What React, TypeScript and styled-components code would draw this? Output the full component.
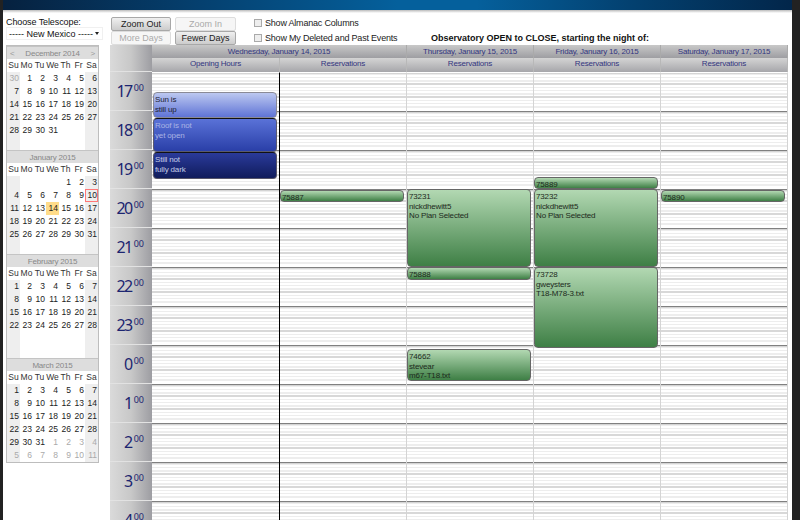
import React from "react";
import styled, { createGlobalStyle } from "styled-components";

const Global = createGlobalStyle`
    html, body {
        margin: 0;
        padding: 0;
        background: #222;
    }
    * {
        box-sizing: border-box;
    }
`;

const FONT = `"Liberation Sans", Arial, sans-serif`;
const TRACKS = "128px repeat(4, 127px)";

// one hour is 39px: dark line, then thin stripes every 3.25px
const stripes = () => {
    const stops: string[] = ["#808080 0px", "#808080 1px"];
    for (let i = 1; i < 12; i++) {
        const y = i * 3.25;
        const color = i % 4 === 0 ? "#d8d8d8" : "#ededed";
        stops.push(`#fff ${y - 1.5}px`, `${color} ${y - 1.5}px`, `${color} ${y}px`, `#fff ${y}px`);
    }
    stops.push("#fff 39px");
    return `linear-gradient(180deg, ${stops.join(", ")})`;
};

type Month = {
    title: string;
    lead: number[];
    days: number;
    trail: number[];
    prev?: boolean;
    today?: number;
    selected?: number;
};

const MONTHS: Month[] = [
    { title: "December 2014", lead: [30], days: 31, trail: [], prev: true },
    { title: "January 2015", lead: [], days: 31, trail: [], today: 14, selected: 10 },
    { title: "February 2015", lead: [], days: 28, trail: [] },
    { title: "March 2015", lead: [], days: 31, trail: [1, 2, 3, 4, 5, 6, 7, 8, 9, 10, 11] },
];

const LEAD_BLANKS: Record<string, number> = { "January 2015": 4 };
const WEEK = ["Su", "Mo", "Tu", "We", "Th", "Fr", "Sa"];
const HOURS = [17, 18, 19, 20, 21, 22, 23, 0, 1, 2, 3, 4];

type Ev = { top: number; height: number; kind: string; lines: string[] };

const COLUMNS: { title: string; events: Ev[] }[] = [
    {
        title: "Opening Hours",
        events: [
            { top: 20, height: 26, kind: "sun", lines: ["Sun is", "still up"] },
            { top: 46, height: 34, kind: "roof", lines: ["Roof is not", "yet open"] },
            { top: 80, height: 27, kind: "dark", lines: ["Still not", "fully dark"] },
        ],
    },
    { title: "Reservations", events: [{ top: 118, height: 12, kind: "green", lines: ["75887"] }] },
    {
        title: "Reservations",
        events: [
            { top: 117, height: 78, kind: "green", lines: ["73231", "nickdhewitt5", "No Plan Selected"] },
            { top: 195, height: 13, kind: "green", lines: ["75888"] },
            { top: 277, height: 32, kind: "green", lines: ["74662", "stevear", "m67-T18.txt"] },
        ],
    },
    {
        title: "Reservations",
        events: [
            { top: 105, height: 12, kind: "green", lines: ["75889"] },
            { top: 117, height: 78, kind: "green", lines: ["73232", "nickdhewitt5", "No Plan Selected"] },
            { top: 195, height: 81, kind: "green", lines: ["73728", "gweysters", "T18-M78-3.txt"] },
        ],
    },
    { title: "Reservations", events: [{ top: 118, height: 12, kind: "green", lines: ["75890"] }] },
];

const App = () => {
    return (
        <Frame>
            <Global />
            <TopBar />
            <Content>
                <Sidebar>
                    <TelescopeLabel>Choose Telescope:</TelescopeLabel>
                    <TelescopeSelect>
                        ----- New Mexico -----
                        <SelectArrow />
                    </TelescopeSelect>
                    <Calendars>
                        {MONTHS.map((m) => {
                            const blanks = LEAD_BLANKS[m.title] || 0;
                            const daysList = Array.from({ length: m.days }, (_, i) => i + 1);
                            const shown = blanks + m.lead.length + m.days + m.trail.length;
                            const filler = 42 - shown;
                            return (
                                <MonthBox key={m.title}>
                                    <MonthTitle>
                                        {m.prev && <Nav>&lt;</Nav>}
                                        <MonthName>{m.title}</MonthName>
                                        {m.prev && <Nav>&gt;</Nav>}
                                    </MonthTitle>
                                    <WeekRow>
                                        {WEEK.map((d) => (
                                            <WeekDay key={d}>{d}</WeekDay>
                                        ))}
                                    </WeekRow>
                                    <DayGrid>
                                        {Array.from({ length: blanks }, (_, i) => (
                                            <Day key={`b${i}`} $weekend={i % 7 === 0} />
                                        ))}
                                        {m.lead.map((d) => (
                                            <Day key={`l${d}`} $weekend $other>
                                                {d}
                                            </Day>
                                        ))}
                                        {daysList.map((d) => {
                                            const idx = (blanks + m.lead.length + d - 1) % 7;
                                            return (
                                                <Day
                                                    key={d}
                                                    $weekend={idx === 0 || idx === 6}
                                                    $today={m.today === d}
                                                    $selected={m.selected === d}
                                                >
                                                    {d}
                                                </Day>
                                            );
                                        })}
                                        {m.trail.map((d, i) => {
                                            const idx = (blanks + m.lead.length + m.days + i) % 7;
                                            return (
                                                <Day key={`t${d}`} $other $weekend={idx === 0 || idx === 6}>
                                                    {d}
                                                </Day>
                                            );
                                        })}
                                        {Array.from({ length: filler }, (_, i) => {
                                            const idx = (shown + i) % 7;
                                            return <Day key={`f${i}`} $weekend={idx === 0 || idx === 6} />;
                                        })}
                                    </DayGrid>
                                </MonthBox>
                            );
                        })}
                    </Calendars>
                </Sidebar>
                <Main>
                    <Toolbar>
                        <ButtonGrid>
                            <Button>Zoom Out</Button>
                            <Button $disabled>Zoom In</Button>
                            <Button $disabled>More Days</Button>
                            <Button>Fewer Days</Button>
                        </ButtonGrid>
                        <Checks>
                            <CheckRow>
                                <Check />
                                Show Almanac Columns
                            </CheckRow>
                            <CheckRow>
                                <Check />
                                Show My Deleted and Past Events
                            </CheckRow>
                        </Checks>
                        <Heading>Observatory OPEN to CLOSE, starting the night of:</Heading>
                    </Toolbar>
                    <Scheduler>
                        <TimeColumn>
                            <TimeHead />
                            {HOURS.map((h) => (
                                <HourCell key={h}>
                                    {h}
                                    <Minutes>00</Minutes>
                                </HourCell>
                            ))}
                        </TimeColumn>
                        <Board>
                            <DayRow>
                                <DayHead $span={2}>Wednesday, January 14, 2015</DayHead>
                                <DayHead>Thursday, January 15, 2015</DayHead>
                                <DayHead>Friday, January 16, 2015</DayHead>
                                <DayHead>Saturday, January 17, 2015</DayHead>
                            </DayRow>
                            <SubRow>
                                {COLUMNS.map((c, i) => (
                                    <SubHead key={i}>{c.title}</SubHead>
                                ))}
                            </SubRow>
                            <Body>
                                {COLUMNS.map((c, i) => (
                                    <Column key={i} $first={i === 0}>
                                        {c.events.map((e) => (
                                            <Event
                                                key={e.lines[0]}
                                                $top={e.top}
                                                $height={e.height}
                                                $kind={e.kind}
                                                $inset={i === 0}
                                            >
                                                {e.lines.map((l) => (
                                                    <div key={l}>{l}</div>
                                                ))}
                                            </Event>
                                        ))}
                                    </Column>
                                ))}
                            </Body>
                        </Board>
                    </Scheduler>
                </Main>
            </Content>
        </Frame>
    );
};

export default App;

const Frame = styled.div`
    width: 800px;
    height: 520px;
    overflow: hidden;
    display: flex;
    flex-direction: column;
    background: #222;
    padding: 0 8px 0 3px;
    font-family: ${FONT};
`;

const TopBar = styled.div`
    height: 10px;
    flex: none;
    background: linear-gradient(90deg, #06213f 0%, #05406f 25%, #05609c 50%, #05609c 60%, #03406f 80%, #02264a 100%);
`;

const Content = styled.div`
    flex: 1;
    min-height: 0;
    display: flex;
    background: linear-gradient(180deg, #bbb 0px, #fff 3px);
`;

const Sidebar = styled.div`
    width: 107px;
    flex: none;
    padding: 6px 0 0 3px;
`;

const TelescopeLabel = styled.div`
    font-size: 9px;
    letter-spacing: -0.1px;
    line-height: 12px;
    color: #111;
`;

const TelescopeSelect = styled.div`
    position: relative;
    width: 97px;
    height: 13px;
    margin-top: -1px;
    padding-left: 2px;
    font-size: 9px;
    line-height: 12px;
    color: #111;
    background: #fff;
    border: 1px solid #f0f0f0;
    white-space: nowrap;
`;

const SelectArrow = styled.span`
    position: absolute;
    right: 3px;
    top: 4px;
    border-left: 2px solid transparent;
    border-right: 2px solid transparent;
    border-top: 3px solid #222;
`;

const Calendars = styled.div`
    margin-top: 5px;
    width: 93px;
    border: 1px solid #bdbdbd;
`;

const MonthBox = styled.div`
    height: 104px;
    overflow: hidden;
`;

const MonthTitle = styled.div`
    height: 13px;
    display: flex;
    align-items: center;
    padding: 0 3px;
    background: #ddd;
    color: #888;
    font-size: 8px;
    letter-spacing: -0.2px;
    white-space: nowrap;
    border-top: 1px solid #c4c4c4;
`;

const MonthName = styled.span`
    flex: 1;
    text-align: center;
`;

const Nav = styled.span`
    color: #999;
`;

const WeekRow = styled.div`
    height: 13px;
    display: grid;
    grid-template-columns: repeat(7, 13px);
    background: #fff;
`;

const WeekDay = styled.div`
    font-size: 8.5px;
    line-height: 13px;
    text-align: center;
    color: #333;
    white-space: nowrap;
`;

const DayGrid = styled.div`
    display: grid;
    grid-template-columns: repeat(7, 13px);
    grid-auto-rows: 13px;
`;

const Day = styled.div<{ $weekend?: boolean; $other?: boolean; $today?: boolean; $selected?: boolean }>`
    font-size: 8.5px;
    line-height: 13px;
    text-align: right;
    padding-right: 1px;
    color: ${(p) => (p.$other ? "#aaa" : "#222")};
    background: ${(p) => (p.$today ? "#ffdc8a" : p.$weekend ? "#eee" : "#fff")};
    ${(p) => p.$selected && "box-shadow: inset 0 0 0 1px #f77;"}
`;

const Main = styled.div`
    flex: 1;
    min-width: 0;
    display: flex;
    flex-direction: column;
`;

const Toolbar = styled.div`
    height: 35px;
    flex: none;
    display: flex;
    padding: 7px 0 0 1px;
`;

const ButtonGrid = styled.div`
    display: grid;
    grid-template-columns: 60px 61px;
    grid-template-rows: 14px 14px;
    column-gap: 4px;
`;

const Button = styled.div<{ $disabled?: boolean }>`
    font-size: 9px;
    line-height: 12px;
    text-align: center;
    color: ${(p) => (p.$disabled ? "#aaa" : "#222")};
    background: ${(p) => (p.$disabled ? "#f6f6f6" : "linear-gradient(180deg, #f0f0f0, #ccc)")};
    border: 1px solid ${(p) => (p.$disabled ? "#ddd" : "#a8a8a8")};
    border-radius: 2px;
`;

const Checks = styled.div`
    width: 177px;
    flex: none;
    margin-left: 18px;
    display: flex;
    flex-direction: column;
    gap: 3px;
`;

const CheckRow = styled.div`
    height: 12px;
    display: flex;
    align-items: center;
    font-size: 9px;
    letter-spacing: -0.2px;
    color: #222;
    white-space: nowrap;
`;

const Check = styled.span`
    width: 8px;
    height: 8px;
    margin-right: 3px;
    flex: none;
    background: #eee;
    border: 1px solid #aaa;
`;

const Heading = styled.div`
    align-self: flex-end;
    font-size: 9px;
    font-weight: 700;
    line-height: 14px;
    color: #111;
    white-space: nowrap;
`;

const Scheduler = styled.div`
    flex: 1;
    min-height: 0;
    width: 678px;
    display: flex;
    overflow: hidden;
`;

const TimeColumn = styled.div`
    width: 42px;
    flex: none;
    background: linear-gradient(90deg, #dadada 0%, #c8c8c8 50%, #9d9da2 100%);
`;

const TimeHead = styled.div`
    height: 27px;
    border-bottom: 1px solid #e2e2e2;
`;

const HourCell = styled.div`
    height: 39px;
    padding: 5px 8px 0 0;
    text-align: right;
    font-family: "Noto Sans", sans-serif;
    font-size: 16px;
    letter-spacing: -1.5px;
    line-height: 22px;
    color: #1c2570;
    border-bottom: 1px solid #e2e2e2;
`;

const Minutes = styled.span`
    font-size: 9px;
    letter-spacing: 0;
    vertical-align: 6px;
    margin-left: 2px;
`;

const Board = styled.div`
    flex: 1;
    min-width: 0;
    display: flex;
    flex-direction: column;
`;

const DayRow = styled.div`
    height: 13px;
    flex: none;
    display: grid;
    grid-template-columns: ${TRACKS};
    background: linear-gradient(180deg, #c8c8c8, #9e9ea2);
`;

const DayHead = styled.div<{ $span?: number }>`
    grid-column: span ${(p) => p.$span || 1};
    font-size: 8px;
    letter-spacing: -0.2px;
    line-height: 13px;
    text-align: center;
    color: #33367f;
    white-space: nowrap;
    border-right: 1px solid #aaa;
`;

const SubRow = styled.div`
    height: 14px;
    flex: none;
    display: grid;
    grid-template-columns: ${TRACKS};
    background: linear-gradient(180deg, #d4d4d4, #a6a6aa);
`;

const SubHead = styled.div`
    font-size: 8px;
    letter-spacing: -0.2px;
    line-height: 12px;
    text-align: center;
    color: #33367f;
    border-right: 1px solid #b8b8b8;
`;

const Body = styled.div`
    flex: 1;
    min-height: 0;
    display: grid;
    grid-template-columns: ${TRACKS};
`;

const Column = styled.div<{ $first?: boolean }>`
    position: relative;
    background-color: #fff;
    background-image: ${stripes()};
    background-size: 100% 39px;
    background-position: 0 -1px;
    border-top: 1px solid #fff;
    border-right: 1px solid ${(p) => (p.$first ? "#000" : "#d4d4d4")};
`;

const KINDS: Record<string, { bg: string; color: string; border: string; cap: string }> = {
    sun: { bg: "linear-gradient(180deg, #bcc8f0, #5f74d6)", color: "#223", border: "#8a8a96", cap: "#8a8a96" },
    roof: { bg: "linear-gradient(180deg, #5a72d8, #2a3fa8)", color: "#aab4e4", border: "#5a5a70", cap: "#111" },
    dark: { bg: "linear-gradient(180deg, #2a3a9a, #101c5c)", color: "#c4cce8", border: "#55556a", cap: "#111" },
    green: { bg: "linear-gradient(180deg, #b2d8b2, #3e7f45)", color: "#1c2a1c", border: "#666", cap: "#666" },
};

const Event = styled.div<{ $top: number; $height: number; $kind: string; $inset?: boolean }>`
    position: absolute;
    left: ${(p) => (p.$inset ? 1 : 0)}px;
    right: 2px;
    top: ${(p) => p.$top - 1}px;
    height: ${(p) => p.$height}px;
    padding: 2px 0 0 1px;
    overflow: hidden;
    font-size: 8px;
    letter-spacing: -0.15px;
    line-height: 9.5px;
    color: ${(p) => KINDS[p.$kind].color};
    background: ${(p) => KINDS[p.$kind].bg};
    border: 1px solid ${(p) => KINDS[p.$kind].border};
    border-top-color: ${(p) => KINDS[p.$kind].cap};
    border-radius: 4px;
`;
